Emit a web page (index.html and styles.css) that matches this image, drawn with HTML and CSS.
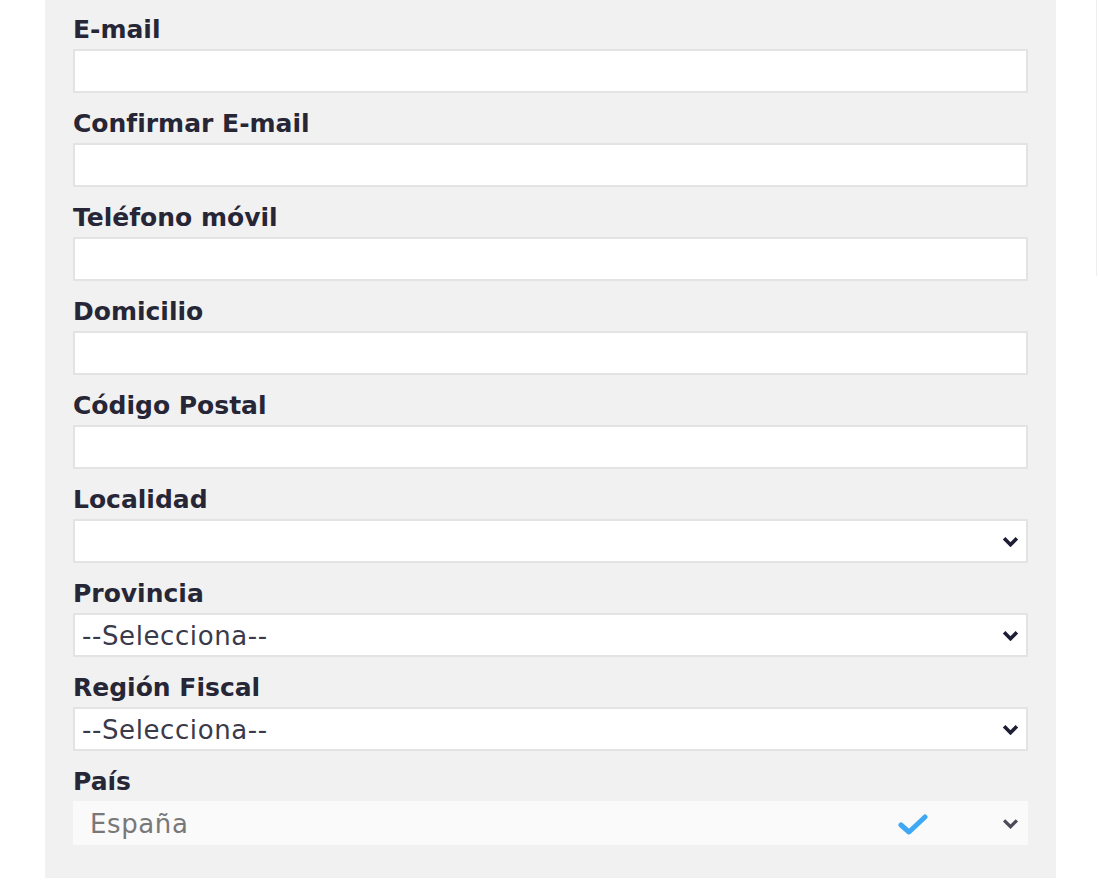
FILE: index.html
```html
<!DOCTYPE html>
<html lang="es">
<head>
    <meta charset="UTF-8">
    <meta name="viewport" content="width=device-width, initial-scale=1.0">
    <title>Datos de contacto</title>
    <link rel="stylesheet" href="styles.css">
</head>
<body>
    <div class="page">
        <form class="form-panel">
            <div class="field">
                <label for="email">E-mail</label>
                <input type="text" id="email" name="email">
            </div>
            <div class="field">
                <label for="email2">Confirmar E-mail</label>
                <input type="text" id="email2" name="email2">
            </div>
            <div class="field">
                <label for="movil">Teléfono móvil</label>
                <input type="text" id="movil" name="movil">
            </div>
            <div class="field">
                <label for="domicilio">Domicilio</label>
                <input type="text" id="domicilio" name="domicilio">
            </div>
            <div class="field">
                <label for="cp">Código Postal</label>
                <input type="text" id="cp" name="cp">
            </div>
            <div class="field">
                <label for="localidad">Localidad</label>
                <div class="select-wrap">
                    <select id="localidad" name="localidad">
                        <option></option>
                    </select>
                    <svg class="chevron" viewBox="0 0 16 10"><path d="M2 2 L8 8 L14 2"/></svg>
                </div>
            </div>
            <div class="field">
                <label for="provincia">Provincia</label>
                <div class="select-wrap">
                    <select id="provincia" name="provincia">
                        <option>--Selecciona--</option>
                    </select>
                    <svg class="chevron" viewBox="0 0 16 10"><path d="M2 2 L8 8 L14 2"/></svg>
                </div>
            </div>
            <div class="field">
                <label for="region">Región Fiscal</label>
                <div class="select-wrap">
                    <select id="region" name="region">
                        <option>--Selecciona--</option>
                    </select>
                    <svg class="chevron" viewBox="0 0 16 10"><path d="M2 2 L8 8 L14 2"/></svg>
                </div>
            </div>
            <div class="field">
                <label for="pais">País</label>
                <div class="select-wrap disabled">
                    <select id="pais" name="pais" disabled>
                        <option>España</option>
                    </select>
                    <svg class="check" viewBox="0 0 30 22"><path d="M3 12 L11 19 L27 4"/></svg>
                    <svg class="chevron" viewBox="0 0 16 10"><path d="M2 2 L8 8 L14 2"/></svg>
                </div>
            </div>
        </form>
        <aside class="side"></aside>
    </div>
</body>
</html>
```

FILE: styles.css
```css
body {
    margin: 0;
    padding: 0;
    background: #ffffff;
    font-family: "DejaVu Sans", "Liberation Sans", sans-serif;
}

.page {
    display: flex;
    align-items: flex-start;
}

.form-panel {
    width: 1011px;
    box-sizing: border-box;
    margin-left: 45px;
    padding: 14px 28px 33px 28px;
    background: #f1f1f1;
}

.field label {
    display: block;
    height: 30px;
    line-height: 32px;
    margin-bottom: 5px;
    font-size: 25px;
    font-weight: bold;
    color: #262636;
}

.field + .field {
    margin-top: 15px;
}

.field input,
.field select {
    display: block;
    width: 100%;
    height: 44px;
    box-sizing: border-box;
    margin: 0;
    border: 2px solid #e3e3e3;
    background: #ffffff;
    font-family: inherit;
    font-size: 26px;
    letter-spacing: 0.6px;
    color: #3a3a4a;
    outline: none;
}

.field select {
    -webkit-appearance: none;
    appearance: none;
    padding: 1px 40px 0 7px;
}

/* chevron and check lie over the select */
.select-wrap {
    position: relative;
}

.select-wrap .chevron {
    position: absolute;
    right: 9px;
    top: 17px;
    width: 17px;
    height: 11px;
    fill: none;
    stroke: #1d1d35;
    stroke-width: 3.4;
    pointer-events: none;
}

.select-wrap.disabled select {
    border-color: #fafafa;
    background: #fafafa;
    color: #787878;
    padding-left: 15px;
    opacity: 1;
}

.select-wrap.disabled .chevron {
    stroke: #4a4a58;
    stroke-width: 3;
}

.select-wrap .check {
    position: absolute;
    right: 100px;
    top: 12px;
    width: 30px;
    height: 22px;
    fill: none;
    stroke: #3fa8f4;
    stroke-width: 5;
    stroke-linecap: round;
    stroke-linejoin: round;
    pointer-events: none;
}

.side {
    margin-left: 40px;
    width: 2px;
    height: 276px;
    border-left: 1px solid #efefef;
}
```
